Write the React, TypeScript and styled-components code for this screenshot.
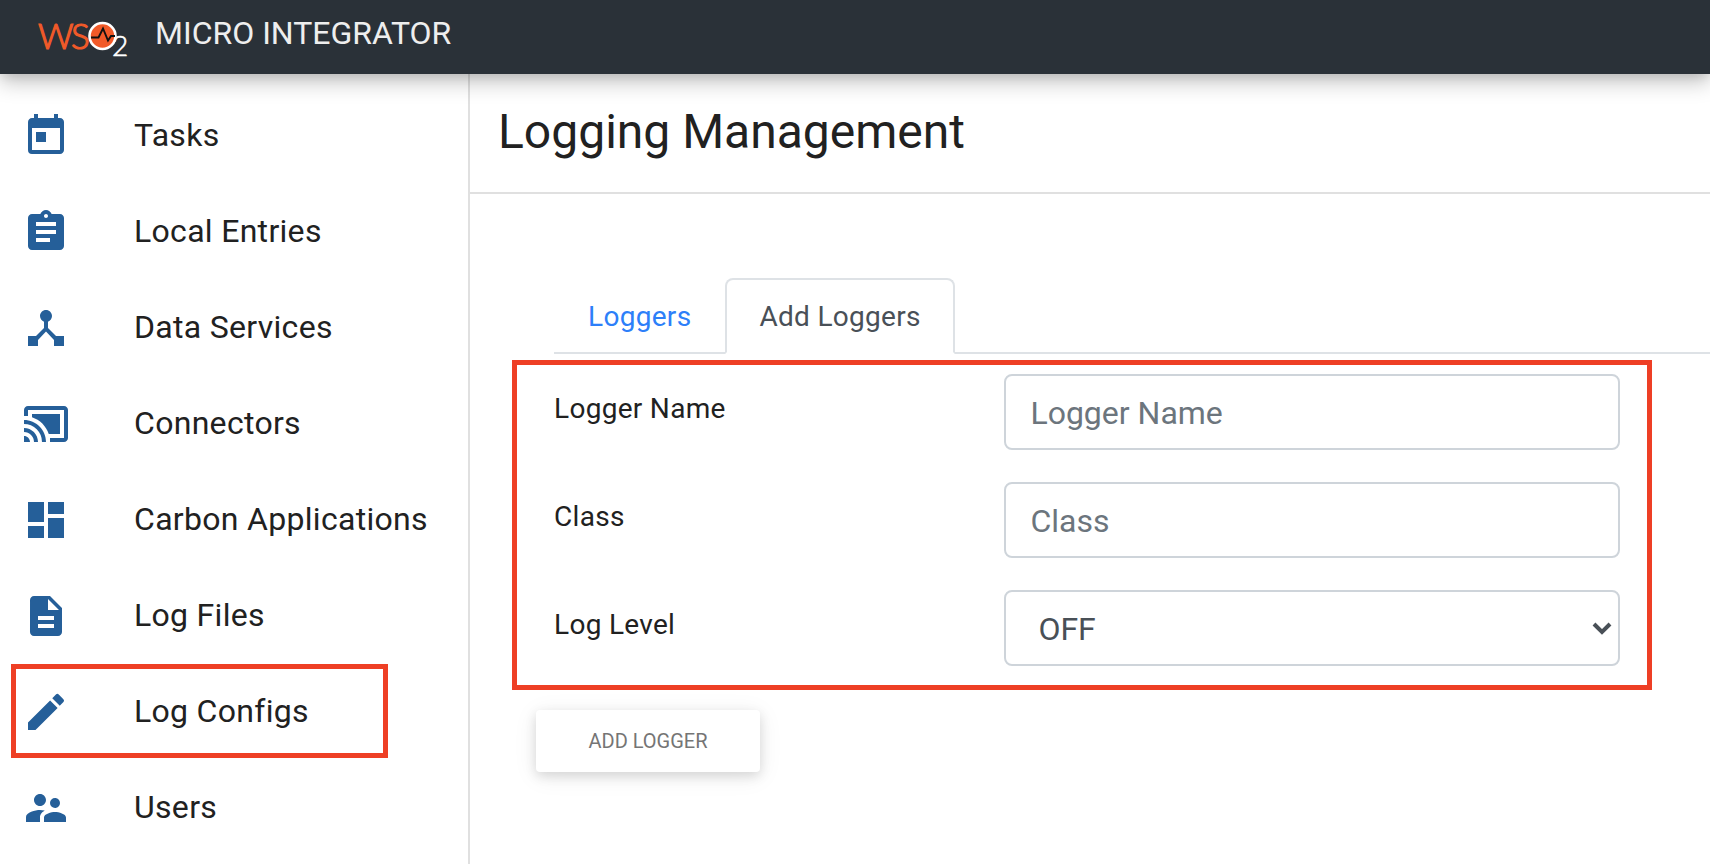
import React from "react";
import styled, { createGlobalStyle } from "styled-components";
import {
  MdToday,
  MdAssignment,
  MdDeviceHub,
  MdCastConnected,
  MdDashboard,
  MdDescription,
  MdCreate,
  MdSupervisorAccount,
} from "react-icons/md";
import type { IconType } from "react-icons";

const GlobalStyle = createGlobalStyle`
  *, *::before, *::after { box-sizing: border-box; }
  body {
    margin: 0;
    background: #fff;
    color: #212121;
    font-family: Roboto, "Liberation Sans", sans-serif;
    font-size: 28px;
    line-height: 40px;
  }
`;

const Page = styled.div`
  display: flex;
  flex-direction: column;
  height: 100vh;
`;

const Header = styled.header`
  position: relative;
  z-index: 1;
  flex: none;
  display: flex;
  align-items: flex-start;
  gap: 25px;
  height: 74px;
  padding: 12px 36px;
  background: #2a3138;
  box-shadow:
    0 4px 10px -2px rgba(0, 0, 0, 0.1),
    0 8px 20px rgba(0, 0, 0, 0.24);
`;

const Product = styled.span`
  color: #eeeeee;
  font-size: 32px;
  line-height: 42px;
`;

const Body = styled.div`
  flex: 1;
  display: flex;
  min-height: 0;
`;

const Sidebar = styled.nav`
  flex: none;
  width: 470px;
  padding-top: 14px;
  border-right: 2px solid #e0e0e0;
  overflow: hidden;
`;

const NavItem = styled.a<{ $marked?: boolean }>`
  position: relative;
  display: flex;
  align-items: center;
  gap: 64px;
  height: 96px;
  padding-left: 22px;
  color: #212121;
  font-size: 32px;
  letter-spacing: 0.00938em;
  line-height: 48px;
  text-decoration: none;

  svg {
    flex: none;
    color: #255f99;
  }

  &::after {
    content: "";
    display: ${(p) => (p.$marked ? "block" : "none")};
    position: absolute;
    inset: 0 80px 2px 11px;
    border: 5px solid #ee3f25;
  }
`;

const NavText = styled.span`
  padding-bottom: 2px;
`;

const Main = styled.main`
  flex: 1;
  min-width: 0;
`;

const TitleBar = styled.div`
  height: 120px;
  padding: 26px 28px;
  border-bottom: 2px solid #e0e0e0;
`;

const Title = styled.h1`
  margin: 0;
  font-size: 48px;
  font-weight: 400;
  line-height: 64px;
`;

const Tabs = styled.div`
  display: flex;
  margin: 84px 0 6px 84px;
  border-bottom: 2px solid #dee2e6;
`;

const Tab = styled.button<{ $active?: boolean }>`
  margin-bottom: -2px;
  padding: 17px 32px 15px;
  border: 2px solid;
  border-color: ${(p) => (p.$active ? "#dee2e6 #dee2e6 #fff" : "transparent")};
  border-radius: 8px 8px 0 0;
  background: ${(p) => (p.$active ? "#fff" : "transparent")};
  color: ${(p) => (p.$active ? "#495057" : "#2d7ff9")};
  font: inherit;
  letter-spacing: 0.01071em;
`;

const Form = styled.form`
  margin: 0 58px 0 42px;
`;

const Fields = styled.div`
  display: flex;
  flex-direction: column;
  gap: 32px;
  padding: 9px 27px 19px 37px;
  border: 5px solid #ee3f25;
`;

const Field = styled.div`
  display: grid;
  grid-template-columns: 2fr 3fr;
  column-gap: 40px;
`;

const Label = styled.label`
  padding-top: 15px;
  letter-spacing: 0.01071em;
`;

const TextBox = styled.input`
  width: 100%;
  height: 76px;
  padding: 14px 24px 12px;
  border: 2px solid #ced4da;
  border-radius: 8px;
  background: #fff;
  color: #495057;
  font: inherit;
  font-size: 32px;

  &::placeholder {
    color: #6c757d;
    opacity: 1;
  }
`;

const SelectWrap = styled.div`
  position: relative;

  svg {
    position: absolute;
    top: 32px;
    right: 8px;
    pointer-events: none;
  }
`;

const Select = styled.select`
  appearance: none;
  width: 100%;
  height: 76px;
  padding: 14px 32px 12px;
  border: 2px solid #ced4da;
  border-radius: 8px;
  background: #fff;
  color: #495057;
  font: inherit;
  font-size: 32px;
`;

const SubmitButton = styled.button`
  width: 224px;
  height: 62px;
  margin: 20px 24px;
  border: 0;
  border-radius: 4px;
  background: #fff;
  color: #757575;
  font: inherit;
  font-size: 20px;
  text-transform: uppercase;
  box-shadow:
    0 4px 12px rgba(0, 0, 0, 0.12),
    0 4px 24px rgba(0, 0, 0, 0.08);
`;

const Logo = () => (
  <svg width="94" height="50" viewBox="0 0 94 50" role="img" aria-label="WSO2">
    <g fontFamily="Lato, sans-serif" fontWeight="300">
      <text x="2" y="37" fontSize="35" fill="#f15a29" stroke="#f15a29" strokeWidth="1.2">W</text>
      <text x="35" y="37" fontSize="35" fill="#f15a29" stroke="#f15a29" strokeWidth="1.2">S</text>
      <text x="76" y="44" fontSize="28" fill="#fff" stroke="#fff" strokeWidth="0.6">2</text>
    </g>
    <circle cx="66.5" cy="24" r="13" fill="#f15a29" stroke="#fff" strokeWidth="2.6" />
    <path d="M55 25.500h7.500l4.500-9 5 12 3-4.500h4" fill="none" stroke="#111" strokeWidth="1.900" />
  </svg>
);

const navItems: { label: string; icon: IconType; marked?: boolean }[] = [
  { label: "Tasks", icon: MdToday },
  { label: "Local Entries", icon: MdAssignment },
  { label: "Data Services", icon: MdDeviceHub },
  { label: "Connectors", icon: MdCastConnected },
  { label: "Carbon Applications", icon: MdDashboard },
  { label: "Log Files", icon: MdDescription },
  { label: "Log Configs", icon: MdCreate, marked: true },
  { label: "Users", icon: MdSupervisorAccount },
];

const levels = ["OFF", "TRACE", "DEBUG", "INFO", "WARN", "ERROR", "FATAL"];

export default function App() {
  return (
    <Page>
      <GlobalStyle />
      <Header>
        <Logo />
        <Product>MICRO INTEGRATOR</Product>
      </Header>
      <Body>
        <Sidebar>
          {navItems.map(({ label, icon: Icon, marked }) => (
            <NavItem key={label} href="#" $marked={marked}>
              <Icon size={48} />
              <NavText>{label}</NavText>
            </NavItem>
          ))}
        </Sidebar>
        <Main>
          <TitleBar>
            <Title>Logging Management</Title>
          </TitleBar>
          <Tabs role="tablist">
            <Tab type="button" role="tab" aria-selected={false}>Loggers</Tab>
            <Tab type="button" role="tab" aria-selected $active>Add Loggers</Tab>
          </Tabs>
          <Form onSubmit={(e) => e.preventDefault()}>
            <Fields>
              <Field>
                <Label htmlFor="logger-name">Logger Name</Label>
                <TextBox id="logger-name" placeholder="Logger Name" />
              </Field>
              <Field>
                <Label htmlFor="logger-class">Class</Label>
                <TextBox id="logger-class" placeholder="Class" />
              </Field>
              <Field>
                <Label htmlFor="log-level">Log Level</Label>
                <SelectWrap>
                  <Select id="log-level" defaultValue="OFF">
                    {levels.map((level) => (
                      <option key={level}>{level}</option>
                    ))}
                  </Select>
                  <svg width="20" height="13" viewBox="0 0 20 13" aria-hidden="true">
                    <path d="M2 2l8 8 8-8" fill="none" stroke="#495057" strokeWidth="4" />
                  </svg>
                </SelectWrap>
              </Field>
            </Fields>
            <SubmitButton type="submit">Add Logger</SubmitButton>
          </Form>
        </Main>
      </Body>
    </Page>
  );
}
